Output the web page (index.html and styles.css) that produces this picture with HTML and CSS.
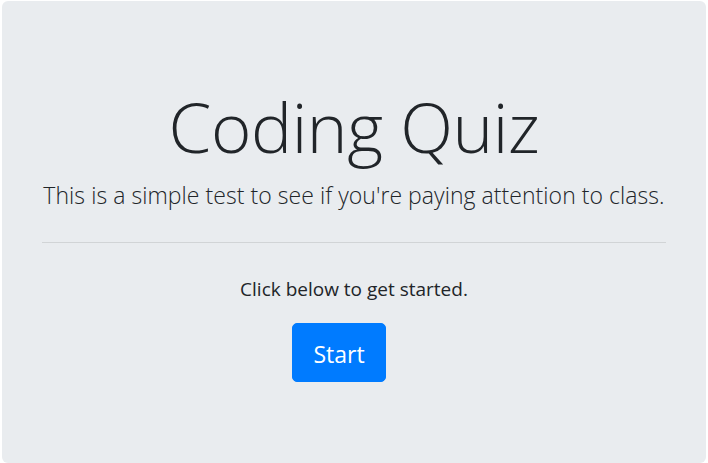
FILE: index.html
```html
<!DOCTYPE html>
<html lang="en">
<head>
<meta charset="utf-8">
<title>Coding Quiz</title>
<link rel="stylesheet" href="styles.css">
</head>
<body>
<main class="jumbotron">
  <h1 class="title">Coding Quiz</h1>
  <p class="lead">This is a simple test to see if you're paying attention to class.</p>
  <hr class="divider">
  <p class="hint">Click below to get started.</p>
  <div class="actions">
    <button class="btn-start" type="button">Start</button>
  </div>
</main>
</body>
</html>
```
FILE: styles.css
```css
html, body {
  margin: 0;
  padding: 0;
  background: #ffffff;
}
body {
  font-family: "Open Sans", "Noto Sans", sans-serif;
  color: #212529;
  padding: 1px 2px 0 2px;
}
.jumbotron {
  background: #e9ecef;
  border-radius: 6px;
  padding: 84px 40px 80px;
  height: 462px;
  box-sizing: border-box;
  text-align: center;
}
.title {
  margin: 0;
  font-size: 69px;
  font-weight: 300;
  line-height: 82px;
  letter-spacing: -0.4px;
}
.lead {
  margin: 12px 0 0;
  font-size: 23px;
  font-weight: 300;
  line-height: 32px;
  letter-spacing: 0.05px;
}
.divider {
  margin: 31px 0 0;
  border: 0;
  border-top: 1px solid rgba(0, 0, 0, 0.1);
}
.hint {
  margin: 34px 0 0;
  font-size: 19px;
  line-height: 24px;
}
.actions {
  margin-top: 22px;
  padding-right: 30px;
}
.btn-start {
  font-family: inherit;
  background: #007bff;
  color: #ffffff;
  border: 1px solid #007bff;
  border-radius: 5px;
  width: 94px;
  height: 59px;
  padding: 4px 0 0;
  font-size: 23px;
  line-height: 1;
  cursor: pointer;
}
```
